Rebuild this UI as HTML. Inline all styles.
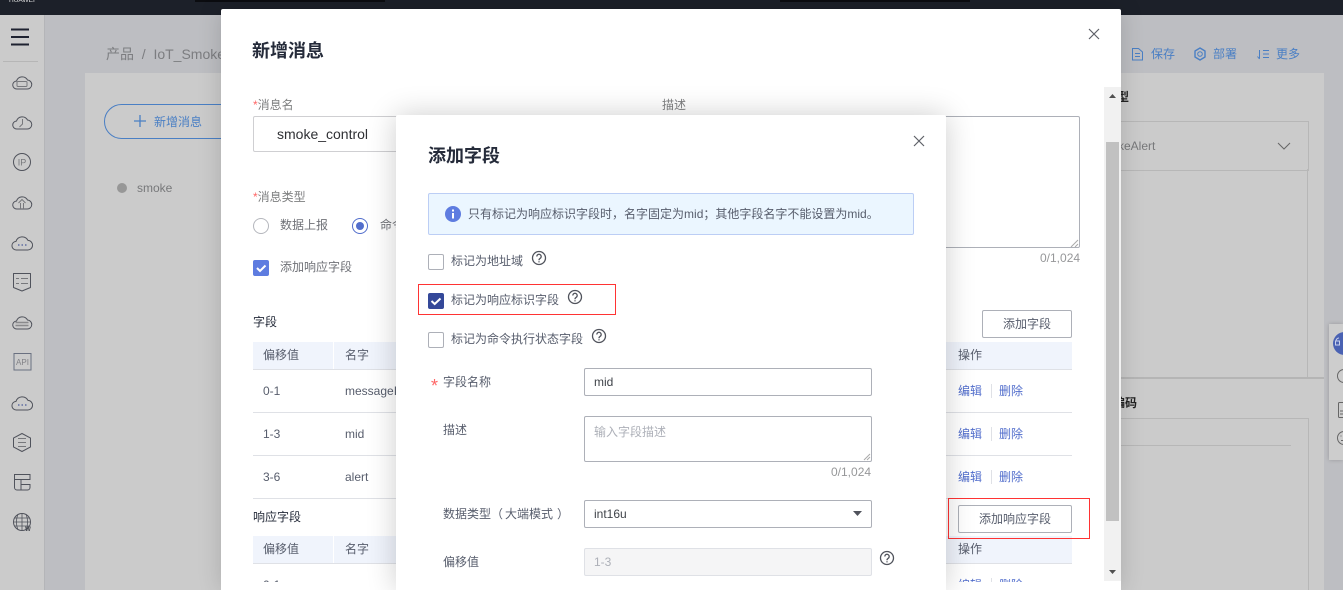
<!DOCTYPE html>
<html lang="zh"><head><meta charset="utf-8"><style>
html,body{margin:0;padding:0;width:1343px;height:590px;overflow:hidden;background:#bdbec2}
body{position:relative;font-family:"Liberation Sans","Noto Sans CJK SC",sans-serif;font-size:12px;color:#575d6c}
.a,.t{position:absolute}
.t{white-space:nowrap;line-height:18px}
svg{position:absolute;overflow:visible}
.inp{position:absolute;box-sizing:border-box;background:#fff;border:1px solid #adb0b8;border-radius:2px}
.btn{position:absolute;box-sizing:border-box;background:#fff;border:1px solid #adb0b8;border-radius:2px;text-align:center;color:#575d6c;height:28px;line-height:26px}
.th{position:absolute;background:#f0f4fc;height:27px;border-bottom:1px solid #dfe1e6;box-sizing:content-box}
.ln{position:absolute;height:1px;background:#dfe1e6}
.lk{color:#526ecc}
.red{position:absolute;box-sizing:border-box;border:1px solid #f33}
.cb{position:absolute;box-sizing:border-box;width:16px;height:16px;border:1px solid #adb0b8;border-radius:2px;background:#fff}
.ic{fill:none;stroke:#50535c;stroke-width:1}
.tc{font-family:"Noto Sans CJK TC",sans-serif}
</style></head><body>
<!-- top bar -->
<div class="a" style="left:0;top:0;width:1343px;height:15px;background:#1c2029"></div>
<div class="a" style="left:195px;top:0;width:190px;height:2px;background:#0b0c10"></div>
<div class="a" style="left:780px;top:0;width:190px;height:2px;background:#0b0c10"></div>
<div class="t" style="left:9px;top:-4px;font-size:6.500px;line-height:10px;color:#e0e0e0">HUAWEI</div>

<!-- sidebar -->
<div class="a" style="left:0;top:15px;width:44px;height:575px;background:#cbcbcb;border-right:1px solid #b4b5b8"></div>
<svg style="left:0;top:0" width="45" height="590">
<path d="M11 29.500h18M11 37h18M11 44.500h18" stroke="#1e2230" stroke-width="2" fill="none"/>
<path d="M3 61.500h35" stroke="#b6b6b6"/>
<g class="ic">
<g transform="translate(13,75)"><path d="M4 14a4 4 0 0 1-.5-8a6 6 0 0 1 11-1a4.500 4.500 0 0 1-.5 9z"/><rect x="4" y="6.500" width="10" height="5" rx="1" stroke="#77787c"/></g>
<g transform="translate(13,115)"><path d="M4 14a4 4 0 0 1-.5-8a6 6 0 0 1 11-1a4.500 4.500 0 0 1-.5 9z"/><path d="M9.500 4v5l-3 3" stroke="#77787c"/></g>
<circle cx="22" cy="162" r="8.500"/>
<g transform="translate(13,195)"><path d="M4 14a4 4 0 0 1-.5-8a6 6 0 0 1 11-1a4.500 4.500 0 0 1-.5 9z"/><path d="M5.500 8l3.500-3.500 3.500 3.500M7.500 8v6M10.500 8v6" stroke="#77787c"/></g>
<g transform="translate(12,235)"><path d="M4.500 15a4.300 4.300 0 0 1-.5-8.600a6.500 6.500 0 0 1 12-1a4.800 4.800 0 0 1-.5 9.600z"/><path d="M6 10h1.500M9.500 10h1.500M13 10h1.500" stroke="#4a5a9a" stroke-width="1.300"/></g>
<path d="M13.500 273.500h17v14l-8.500 3.500-8.500-3.500z" stroke-linejoin="round"/><path d="M16 278.500h3M21 278.500h7M16 283.500h3M21 283.500h7" stroke="#77787c"/>
<g transform="translate(13,315)"><path d="M4 14a4 4 0 0 1-.5-8a6 6 0 0 1 11-1a4.500 4.500 0 0 1-.5 9z"/><path d="M2.500 7.500h13M2.500 10.500h13" stroke="#8a8a8c" stroke-width="1.500"/></g>
<path d="M14 353.500h17v16.500h-17z" stroke="#6a7080"/>
<g transform="translate(12,395)"><path d="M4.500 15a4.300 4.300 0 0 1-.5-8.600a6.500 6.500 0 0 1 12-1a4.800 4.800 0 0 1-.5 9.600z"/><path d="M6 10h1.500M9.500 10h1.500M13 10h1.500" stroke="#4a5a9a" stroke-width="1.300"/></g>
<path d="M22 433.500l8.500 4.500v9l-8.500 4.500-8.500-4.500v-9z"/><path d="M18 438.500h8M18 442.500h8M18 446.500h8" stroke="#77787c"/>
<path d="M14.500 474.500h15.500v5h-15.500zM14.500 479.500v8a2.500 2.500 0 0 0 2.500 2.500h4v-10.500M21 484.500h9v3a2.500 2.500 0 0 1-2.500 2.500h-6.500"/>
<circle cx="22" cy="522" r="8.500"/><path d="M13.500 522h17M14.500 518h15M14.500 526h15M22 513.500v17M18 514c-2 5-2 11 0 16M26 514c2 5 2 11 0 16" stroke-width=".8"/>
</g>
<text x="22" y="165.500" text-anchor="middle" font-size="9" fill="#77787c">IP</text>
<text x="22.500" y="365" text-anchor="middle" font-size="8" fill="#808186">API</text>
<text x="28" y="531" text-anchor="middle" font-size="6" font-weight="bold" fill="#44474e">W</text>
</svg>

<!-- background page -->
<div class="a" style="left:85px;top:73px;width:1239px;height:517px;background:#cbcbcb"></div>
<div class="t" style="left:106px;top:45px;font-size:14px;color:#7c7d80;line-height:18px">产品 &nbsp;/&nbsp; IoT_Smoke</div>
<div class="a" style="left:104px;top:104px;width:140px;height:35px;box-sizing:border-box;border:1px solid #4a7fc4;border-radius:18px"></div>
<svg style="left:130px;top:110px" width="20" height="20"><path d="M10 5v12M4 11h12" stroke="#4a7fc4" stroke-width="1.300"/></svg>
<div class="t" style="left:154px;top:113px;color:#4a7fc4">新增消息</div>
<div class="a" style="left:117px;top:183px;width:10px;height:10px;border-radius:50%;background:#979797"></div>
<div class="t" style="left:137px;top:179px;color:#77787a">smoke</div>
<!-- right of page -->
<div class="t" style="left:1151px;top:45px;color:#4a7fc4;font-size:12px">保存</div>
<div class="t" style="left:1213px;top:45px;color:#4a7fc4">部署</div>
<div class="t" style="left:1276px;top:45px;color:#4a7fc4">更多</div>
<svg style="left:1130px;top:46px" width="160" height="16" fill="none" stroke="#4a7fc4">
<path d="M2.500 2.500h6l4 3.500v8h-10zM5 7.500h5M5 10.500h5"/>
<circle cx="70" cy="8" r="2.300"/><path d="M70 2l5 3v6l-5 3-5-3v-6z" stroke-width="1.400" stroke-linejoin="round"/>
<path d="M129.500 4v8.500M127.500 10.500l2 2.500M133 4.500h6M133 8h6M133 11.500h6"/></svg>
<div class="t" style="left:1117px;top:88px;color:#222;font-weight:bold;font-size:12px">型</div>
<div class="a" style="left:1121px;top:121px;width:187px;height:48px;border:solid #b7b7b7;border-width:1px 1px 1px 0"></div>
<div class="a" style="left:1307px;top:169px;width:1px;height:209px;background:#b7b7b7"></div>
<div class="t" style="left:1118px;top:137px;color:#77787a">keAlert</div>
<svg style="left:1276px;top:141px" width="16" height="12"><path d="M2 2l6 6 6-6" fill="none" stroke="#666"/></svg>
<div class="a" style="left:1121px;top:377px;width:203px;height:2px;background:#b5b5b5"></div>
<div class="t" style="left:1113px;top:394px;color:#222;font-weight:bold">编码</div>
<div class="a" style="left:1121px;top:418px;width:187px;height:172px;border:solid #b7b7b7;border-width:1px 1px 0 0"></div>
<div class="a" style="left:1121px;top:445px;width:170px;height:1px;background:#b7b7b7"></div>
<!-- floating panel -->
<div class="a" style="left:1329px;top:324px;width:14px;height:136px;background:#cdcdcd;box-shadow:0 0 4px rgba(0,0,0,.2)"></div>
<div class="a" style="left:1333px;top:332px;width:23px;height:23px;border-radius:50%;background:#4a62b3"></div>
<svg style="left:1329px;top:324px" width="14" height="136" fill="none" stroke="#666"><circle cx="15" cy="52" r="6.500"/><rect x="9.500" y="78.500" width="12" height="15" rx="1"/><path d="M11 87h3M11 90h3"/><circle cx="15" cy="114" r="6.500"/><path d="M12 111.500v1M12 116.500h2"/></svg>
<svg style="left:1329px;top:324px" width="14" height="30" fill="none" stroke="#c9d1ec"><path d="M7 17a3 3 0 0 1 3-3M6.500 17v4h4v-4z"/></svg>

<!-- outer modal -->
<div class="a" style="left:221px;top:9px;width:900px;height:581px;background:#fff;border-radius:2px 2px 0 0;box-shadow:0 0 24px rgba(0,0,0,.16)"></div>
<div class="t" style="left:252px;top:39px;font-size:18px;font-weight:bold;color:#252b3a;line-height:24px">新增消息</div>
<svg style="left:1087px;top:27px" width="14" height="14"><path d="M2 2l10 10M12 2l-10 10" stroke="#5e6068" stroke-width="1.200"/></svg>
<div class="t" style="left:253px;top:96px;color:#7e7f80"><span style="color:#f66">*</span>消息名</div>
<div class="t" style="left:662px;top:96px;color:#7e7f80">描述</div>
<div class="inp" style="left:253px;top:116px;width:250px;height:36px;border-color:#cfcfd2"></div>
<div class="t" style="left:277px;top:125px;font-size:14px;color:#2f3034">smoke_control</div>
<div class="inp" style="left:600px;top:116px;width:480px;height:132px"></div>
<svg style="left:1069px;top:238px" width="10" height="10"><path d="M9 2l-7 7M9 6l-3 3" stroke="#aaa"/></svg>
<div class="t" style="left:1040px;top:249px;color:#969799">0/1,024</div>
<div class="t" style="left:253px;top:188px;color:#7e7f80"><span style="color:#f66">*</span>消息类型</div>
<div class="a" style="left:253px;top:218px;width:16px;height:16px;box-sizing:border-box;border:1px solid #b5b7bd;border-radius:50%"></div>
<div class="t" style="left:280px;top:216px;color:#6f7177">数据上报</div>
<div class="a" style="left:352px;top:218px;width:16px;height:16px;box-sizing:border-box;border:1px solid #526ecc;border-radius:50%"></div>
<div class="a" style="left:356px;top:222px;width:8px;height:8px;border-radius:50%;background:#526ecc"></div>
<div class="t" style="left:380px;top:216px;color:#6f7177">命令</div>
<div class="cb" style="left:253px;top:260px;background:#5e7ce0;border:0"></div>
<svg style="left:253px;top:260px" width="16" height="16"><path d="M4 8l3 3 5.500-5.500" fill="none" stroke="#fff" stroke-width="2"/></svg>
<div class="t" style="left:280px;top:258px;color:#6f7177">添加响应字段</div>

<div class="t" style="left:253px;top:313px;color:#252b3a">字段</div>
<div class="btn" style="left:982px;top:310px;width:90px">添加字段</div>
<div class="th" style="left:253px;top:342px;width:819px"></div>
<div class="a" style="left:333px;top:342px;width:1px;height:27px;background:#fff"></div>
<div class="t" style="left:263px;top:346px;color:#575d6c">偏移值</div>
<div class="t" style="left:345px;top:346px;color:#575d6c">名字</div>
<div class="t" style="left:958px;top:346px;color:#575d6c">操作</div>
<div class="t" style="left:263px;top:382px">0-1</div><div class="t" style="left:345px;top:382px">messageId</div>
<div class="ln" style="left:253px;top:412px;width:819px"></div>
<div class="t" style="left:263px;top:425px">1-3</div><div class="t" style="left:345px;top:425px">mid</div>
<div class="ln" style="left:253px;top:455px;width:819px"></div>
<div class="t" style="left:263px;top:468px">3-6</div><div class="t" style="left:345px;top:468px">alert</div>
<div class="ln" style="left:253px;top:498px;width:819px"></div>
<div class="t lk" style="left:958px;top:382px">编辑</div><div class="t lk" style="left:999px;top:382px">删除</div><div class="a" style="left:991px;top:384px;width:1px;height:14px;background:#dfe1e6"></div>
<div class="t lk" style="left:958px;top:425px">编辑</div><div class="t lk" style="left:999px;top:425px">删除</div><div class="a" style="left:991px;top:427px;width:1px;height:14px;background:#dfe1e6"></div>
<div class="t lk" style="left:958px;top:468px">编辑</div><div class="t lk" style="left:999px;top:468px">删除</div><div class="a" style="left:991px;top:470px;width:1px;height:14px;background:#dfe1e6"></div>
<div class="t" style="left:253px;top:508px;color:#252b3a">响应字段</div>
<div class="th" style="left:253px;top:536px;width:819px"></div>
<div class="btn" style="left:958px;top:505px;width:114px">添加响应字段</div>
<div class="red" style="left:948px;top:498px;width:142px;height:41px"></div>
<div class="a" style="left:333px;top:536px;width:1px;height:27px;background:#fff"></div>
<div class="t" style="left:263px;top:540px">偏移值</div>
<div class="t" style="left:345px;top:540px">名字</div>
<div class="t" style="left:958px;top:540px">操作</div>
<div class="t lk" style="left:958px;top:576px">编辑</div><div class="t lk" style="left:999px;top:576px">删除</div><div class="a" style="left:991px;top:578px;width:1px;height:14px;background:#dfe1e6"></div>
<div class="t" style="left:263px;top:576px">0-1</div>
<!-- clip scrolled content at the modal body bottom -->
<div class="a" style="left:221px;top:582px;width:900px;height:8px;background:#fff"></div>
<!-- scrollbar -->
<div class="a" style="left:1104px;top:87px;width:17px;height:494px;background:#f1f1f1"></div>
<div class="a" style="left:1106px;top:142px;width:13px;height:379px;background:#c1c1c1"></div>
<svg style="left:1104px;top:87px" width="17" height="494" fill="#505050"><path d="M5 11l3.500-4 3.500 4zM5 483h7l-3.500 4z"/></svg>

<!-- inner modal -->
<div class="a" style="left:396px;top:115px;width:550px;height:475px;background:#fff;border-radius:2px 2px 0 0;box-shadow:0 0 30px rgba(0,0,0,.2)"></div>
<div class="t" style="left:428px;top:144px;font-size:18px;font-weight:bold;color:#252b3a;line-height:24px">添加字段</div>
<svg style="left:912px;top:134px" width="14" height="14"><path d="M2 2l10 10M12 2l-10 10" stroke="#5e6068" stroke-width="1.200"/></svg>
<div class="a" style="left:428px;top:193px;width:486px;height:42px;box-sizing:border-box;background:#ebf6ff;border:1px solid #bccef5;border-radius:2px"></div>
<svg style="left:445px;top:206px" width="16" height="16"><circle cx="8" cy="8" r="8" fill="#5e7ce0"/><path d="M8 3.500v2M8 7v5.500" stroke="#fff" stroke-width="2"/></svg>
<div class="t" style="left:468px;top:205px;color:#575d6c">只有标记为响应标识字段时<span class="tc">，</span>名字固定为mid<span class="tc">；</span>其他字段名字不能设置为mid。</div>

<div class="cb" style="left:428px;top:254px"></div>
<div class="t" style="left:451px;top:252px">标记为地址域</div>
<div class="cb" style="left:428px;top:293px;background:#344899;border:0"></div>
<svg style="left:428px;top:293px" width="16" height="16"><path d="M3.500 8l3.200 3 5.800-5.500" fill="none" stroke="#fff" stroke-width="2"/></svg>
<div class="t" style="left:451px;top:291px">标记为响应标识字段</div>
<div class="red" style="left:418px;top:284px;width:198px;height:31px"></div>
<div class="cb" style="left:428px;top:332px"></div>
<div class="t" style="left:451px;top:330px">标记为命令执行状态字段</div>
<svg style="left:530px;top:249px" width="370" height="330" fill="none" stroke="#50535c" stroke-width="1.300">
<g><circle cx="9" cy="9" r="6.500"/><path d="M6.800 7.500a2.200 2.200 0 1 1 3.400 1.800c-.8.500-1.200 1-1.200 1.900M9 12.200v1.200"/></g>
<g transform="translate(36,39)"><circle cx="9" cy="9" r="6.500"/><path d="M6.800 7.500a2.200 2.200 0 1 1 3.400 1.800c-.8.500-1.200 1-1.200 1.900M9 12.200v1.200"/></g>
<g transform="translate(60,78)"><circle cx="9" cy="9" r="6.500"/><path d="M6.800 7.500a2.200 2.200 0 1 1 3.400 1.800c-.8.500-1.200 1-1.200 1.900M9 12.200v1.200"/></g>
<g transform="translate(348,300)"><circle cx="9" cy="9" r="6.500"/><path d="M6.800 7.500a2.200 2.200 0 1 1 3.400 1.800c-.8.500-1.200 1-1.200 1.900M9 12.200v1.200"/></g>
</svg>

<div class="t" style="left:431px;top:377px;color:#f66;font-size:18px;line-height:18px">*</div>
<div class="t" style="left:443px;top:373px">字段名称</div>
<div class="inp" style="left:584px;top:368px;width:288px;height:28px"></div>
<div class="t" style="left:594px;top:373px;color:#3f4349">mid</div>
<div class="t" style="left:443px;top:421px">描述</div>
<div class="inp" style="left:584px;top:416px;width:288px;height:46px"></div>
<div class="t" style="left:594px;top:423px;color:#adb0b8">输入字段描述</div>
<svg style="left:862px;top:452px" width="9" height="9"><path d="M8 2l-6 6M8 5l-3 3" stroke="#aaa"/></svg>
<div class="t" style="left:831px;top:463px;color:#969799">0/1,024</div>
<div class="t" style="left:443px;top:505px">数据类型（<span style="position:relative;left:2px">大端模式</span><span style="position:relative;left:6px">）</span></div>
<div class="inp" style="left:584px;top:500px;width:288px;height:28px"></div>
<div class="t" style="left:594px;top:505px;color:#3f4349">int16u</div>
<svg style="left:852px;top:510px" width="12" height="8"><path d="M1 1h9l-4.500 5z" fill="#50535c"/></svg>
<div class="t" style="left:443px;top:553px">偏移值</div>
<div class="inp" style="left:584px;top:548px;width:288px;height:28px;background:#f5f5f6;border-color:#dfe1e6"></div>
<div class="t" style="left:594px;top:553px;color:#adb0b8">1-3</div>
</body></html>
